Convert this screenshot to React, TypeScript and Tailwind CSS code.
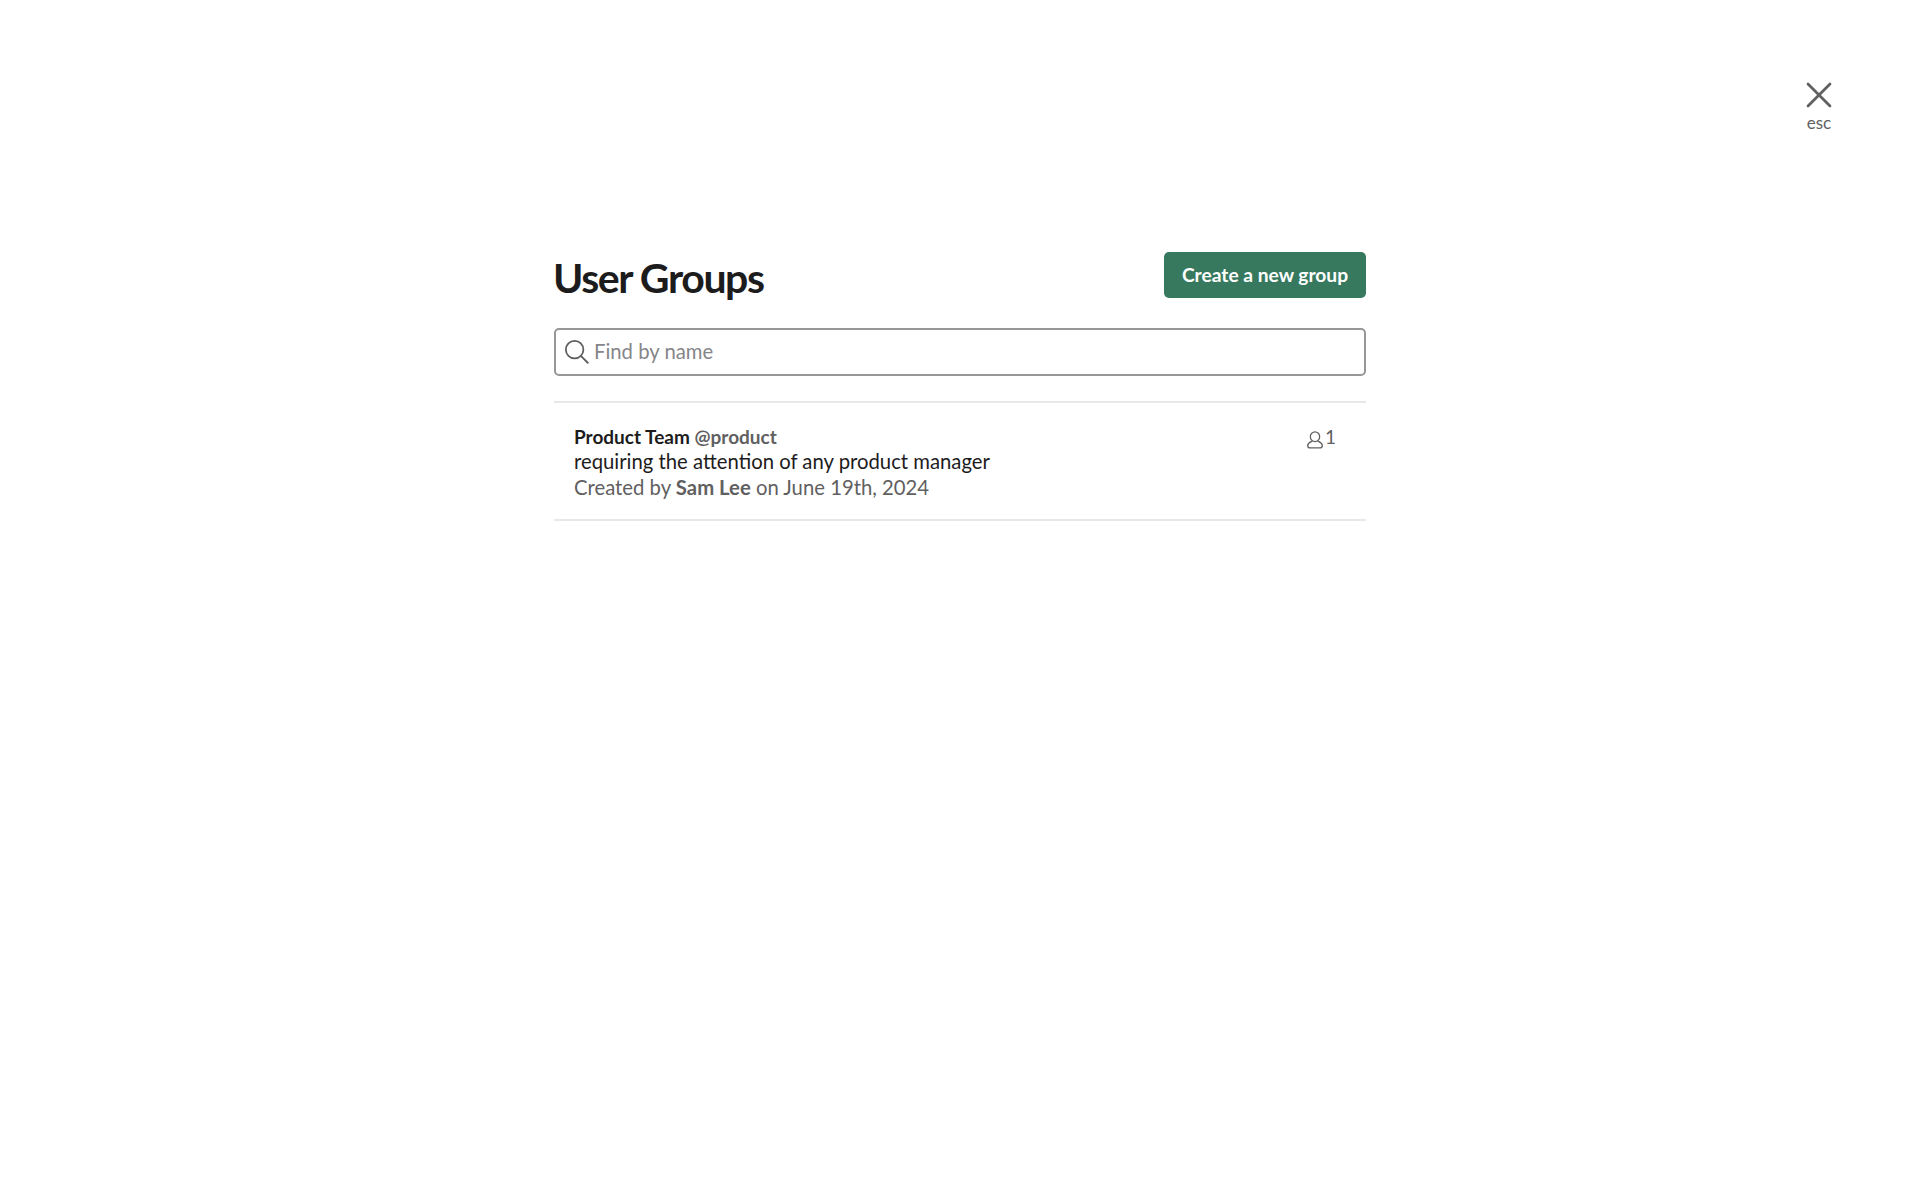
import { X } from 'lucide-react';

function SearchIcon() {
  return (
    <svg width="25" height="25" viewBox="0 0 24 24" fill="none" stroke="#5e5d60" strokeWidth="1.7" strokeLinecap="round" className="-mt-[1px] -ml-[1px]">
      <circle cx="10.2" cy="10.2" r="8.4" />
      <path d="M16.4 16.4 L22.8 22.8" />
    </svg>
  );
}

function MemberIcon() {
  return (
    <svg width="18" height="18" viewBox="0 0 17 17" fill="none" stroke="#616061" strokeWidth="1.2" strokeLinejoin="round">
      <ellipse cx="8.5" cy="5.4" rx="4.4" ry="4.6" />
      <path d="M6 9.4 C4 10.4 1.6 11.2 1.6 13.6 C1.6 15.4 2.6 16 4.2 16 H12.8 C14.4 16 15.4 15.4 15.4 13.6 C15.4 11.2 13 10.4 11 9.4" />
    </svg>
  );
}

export default function App() {
  return (
    <div className="relative min-h-[1200px] bg-white font-['Lato','Noto_Sans',sans-serif] text-[#1d1c1d]">
      <div className="absolute right-[85px] top-[73px] flex w-[32px] flex-col items-center text-[#616061]">
        <X className="h-[44px] w-[44px] shrink-0" strokeWidth={1.5} />
        <span className="-mt-[4px] text-[17px] leading-[20px]">esc</span>
      </div>

      <div className="mx-auto w-[812px] pt-[252px]">
        <div className="flex items-start justify-between">
          <h1 className="-ml-[1px] pt-[3px] text-[41px] font-bold leading-[46px] tracking-[-1.4px]">User Groups</h1>
          <button
            type="button"
            className="h-[46px] w-[202px] rounded-[5px] bg-[#37795e] text-center text-[19.2px] font-bold text-white"
          >
            Create a new group
          </button>
        </div>

        <div className="mt-[27px] flex h-[48px] items-center rounded-[5px] border-2 border-[#979698] pl-[9px]">
          <SearchIcon />
          <span className="-mt-[1px] ml-[5px] text-[20.3px] text-[#868589]">Find by name</span>
        </div>

        <div className="mt-[25px] flex h-[120px] justify-between border-y-2 border-[#e8e8e8] pl-[20px] pr-[30px] pt-[21px]">
          <div className="text-[20.3px] leading-[25px]">
            <div className="text-[19px] font-bold leading-[25px]">
              Product Team <span className="text-[#616061]">@product</span>
            </div>
            <div>requiring the attention of any product manager</div>
            <div className="mt-[1px] text-[#616061]">
              Created by <span className="font-bold">Sam Lee</span> on June 19th, 2024
            </div>
          </div>
          <div className="flex items-start gap-[1px] text-[19px] leading-[25px] text-[#616061]">
            <span className="pt-[7px]">
              <MemberIcon />
            </span>
            <span>1</span>
          </div>
        </div>
      </div>
    </div>
  );
}
